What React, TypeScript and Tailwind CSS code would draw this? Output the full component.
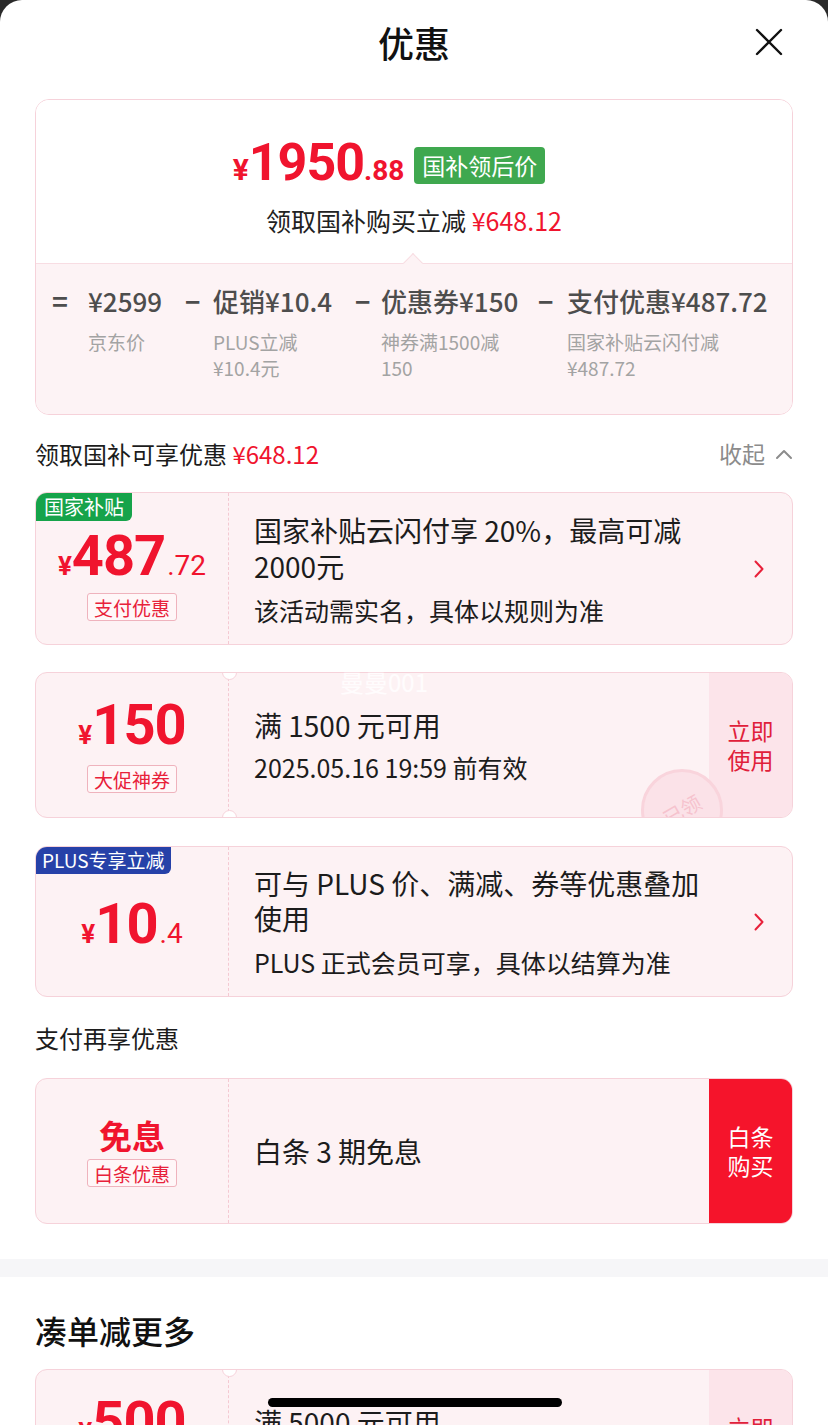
import React from 'react';

const cn = "font-['Noto_Sans_CJK_SC',sans-serif]";
const num = "font-['Roboto','Noto_Sans_CJK_SC',sans-serif]";

function ChevronRight() {
    return (
        <svg width="12" height="20" viewBox="0 0 12 20" fill="none">
            <path d="M2.5 2.5l7 7.5-7 7.5" stroke="#e8213a" strokeWidth="2" strokeLinecap="round" strokeLinejoin="round" />
        </svg>
    );
}

function Tag({ text }: { text: string }) {
    return (
        <span className="inline-flex h-[28px] items-center rounded-[3px] border border-[#efb3bd] bg-[#fff7f8] px-[6px] text-[19px] leading-none text-[#e8213a]">
            {text}
        </span>
    );
}

function Notches() {
    return (
        <>
            <div className="absolute left-[186px] top-[-8px] h-[15px] w-[15px] rounded-full border border-[#f6d2da] bg-white" />
            <div className="absolute bottom-[-8px] left-[186px] h-[15px] w-[15px] rounded-full border border-[#f6d2da] bg-white" />
        </>
    );
}

function Card({
    h,
    left,
    children,
    right,
    badge,
    notch,
    extra,
}: {
    h: string;
    left: React.ReactNode;
    children: React.ReactNode;
    right?: React.ReactNode;
    badge?: React.ReactNode;
    notch?: boolean;
    extra?: React.ReactNode;
}) {
    return (
        <div className={`relative flex ${h} overflow-hidden rounded-[12px] border border-[#f6d2da] bg-[#fdf2f4]`}>
            {badge}
            <div className="flex w-[193px] shrink-0 flex-col items-center justify-center border-r border-dashed border-[#f4c9d2]">
                {left}
            </div>
            <div className="flex min-w-0 flex-1 flex-col justify-center pl-[25px] text-[#1c1c1c]">{children}</div>
            {right}
            {notch && <Notches />}
            {extra}
        </div>
    );
}

function Price({ big, small }: { big: string; small?: string }) {
    return (
        <div className={`flex items-baseline text-[#f0142e] ${num}`}>
            <span className="text-[26px] font-bold">¥</span>
            <span className="text-[56px] font-bold leading-[56px] tracking-[-1px]">{big}</span>
            {small && <span className="ml-[2px] text-[28px]">{small}</span>}
        </div>
    );
}

export default function App() {
    return (
        <div className={`relative h-[1425px] w-[828px] overflow-hidden bg-[#2a2a2a] ${cn}`}>
            <div className="h-full w-full rounded-t-[22px] bg-white">
                {/* header */}
                <div className="relative flex h-[84px] items-center justify-center">
                    <h1 className="text-[36px] font-medium text-[#111]">优惠</h1>
                    <button className="absolute right-[44px] top-[27px]">
                        <svg width="30" height="30" viewBox="0 0 30 30">
                            <path d="M3 3l24 24M27 3L3 27" stroke="#111" strokeWidth="2.4" strokeLinecap="round" />
                        </svg>
                    </button>
                </div>

                <div className="px-[35px]">
                    {/* summary card */}
                    <div className="mt-[15px] overflow-hidden rounded-[14px] border border-[#f6d2da]">
                        <div className="flex h-[163px] flex-col items-center bg-white pt-[38px]">
                            <div className="mr-[50px] flex items-center">
                                <div className={`flex items-baseline text-[#f0142e] ${num}`}>
                                    <span className="text-[30px] font-bold">¥</span>
                                    <span className="text-[52px] font-bold leading-[50px] tracking-[-1px]">1950</span>
                                    <span className="text-[28px] font-bold">.88</span>
                                </div>
                                <span className="ml-[10px] rounded-[4px] bg-[#3fa84f] px-[8px] py-[3px] text-[23px] leading-[31px] text-white">
                                    国补领后价
                                </span>
                            </div>
                            <div className="mt-[10px] text-[25px] text-[#222]">
                                领取国补购买立减 <span className="text-[#f0142e]">¥648.12</span>
                            </div>
                        </div>
                        <div className="relative h-[151px] border-t border-[#f8dde3] bg-[#fdf3f5] pl-[16px] pt-[20px]">
                            <div className="absolute left-[370px] top-[-8px] h-[14px] w-[14px] rotate-45 border-l border-t border-[#f8dde3] bg-[#fdf3f5]" />
                            <div className="grid grid-cols-[36px_97px_28px_142px_26px_157px_29px_1fr] text-[#4d4d4d]">
                                <div className="text-[27px] font-bold leading-[34px]">=</div>
                                <div>
                                    <div className="text-[26px] font-medium leading-[34px]">¥2599</div>
                                    <div className="mt-[11px] text-[19px] leading-[26px] text-[#a3a3a3]">京东价</div>
                                </div>
                                <div className="text-[26px] font-bold leading-[34px]">−</div>
                                <div>
                                    <div className="text-[26px] font-medium leading-[34px]">促销¥10.4</div>
                                    <div className="mt-[11px] text-[19px] leading-[26px] text-[#a3a3a3]">
                                        PLUS立减
                                        <br />
                                        ¥10.4元
                                    </div>
                                </div>
                                <div className="text-[26px] font-bold leading-[34px]">−</div>
                                <div>
                                    <div className="text-[26px] font-medium leading-[34px]">优惠券¥150</div>
                                    <div className="mt-[11px] text-[19px] leading-[26px] text-[#a3a3a3]">
                                        神券满1500减
                                        <br />
                                        150
                                    </div>
                                </div>
                                <div className="text-[26px] font-bold leading-[34px]">−</div>
                                <div>
                                    <div className="whitespace-nowrap text-[26px] font-medium leading-[34px]">支付优惠¥487.72</div>
                                    <div className="mt-[11px] text-[19px] leading-[26px] text-[#a3a3a3]">
                                        国家补贴云闪付减
                                        <br />
                                        ¥487.72
                                    </div>
                                </div>
                            </div>
                        </div>
                    </div>

                    {/* section title */}
                    <div className="flex h-[77px] items-center justify-between">
                        <div className="text-[24px] text-[#1c1c1c]">
                            领取国补可享优惠 <span className="text-[#f0142e]">¥648.12</span>
                        </div>
                        <div className="flex items-center gap-[10px] text-[23px] text-[#8c8c8c]">
                            收起
                            <svg width="18" height="12" viewBox="0 0 18 12" fill="none">
                                <path d="M2 10l7-7 7 7" stroke="#8c8c8c" strokeWidth="2" strokeLinecap="round" strokeLinejoin="round" />
                            </svg>
                        </div>
                    </div>

                    {/* 国家补贴 */}
                    <Card
                        h="h-[153px]"
                        badge={
                            <div className="absolute left-0 top-0 flex h-[28px] items-center rounded-br-[6px] bg-[#16a34a] px-[8px] text-[20px] text-white">
                                国家补贴
                            </div>
                        }
                        left={
                            <div className="mt-[12px] flex flex-col items-center">
                                <Price big="487" small=".72" />
                                <div className="mt-[6px]">
                                    <Tag text="支付优惠" />
                                </div>
                            </div>
                        }
                        right={
                            <div className="flex w-[66px] items-center justify-center">
                                <ChevronRight />
                            </div>
                        }
                    >
                        <div className="text-[28px] leading-[36px]">
                            国家补贴云闪付享 20%，最高可减
                            <br />
                            2000元
                        </div>
                        <div className="mt-[10px] text-[25px] leading-[32px]">该活动需实名，具体以规则为准</div>
                    </Card>

                    {/* 神券 */}
                    <div className="mt-[27px]">
                        <Card
                            h="h-[146px]"
                            notch
                            left={
                                <div className="flex flex-col items-center">
                                    <Price big="150" />
                                    <div className="mt-[10px]">
                                        <Tag text="大促神券" />
                                    </div>
                                </div>
                            }
                            right={
                                <div className="flex w-[83px] items-center justify-center bg-[#fce4ea] text-center text-[23px] leading-[29px] text-[#e0203a]">
                                    立即
                                    <br />
                                    使用
                                </div>
                            }
                            extra={
                                <div className="absolute left-[605px] top-[96px] flex h-[82px] w-[82px] items-center justify-center rounded-full border-[3px] border-[#f9d4dc] bg-[#fbe2e8]">
                                    <span className="-rotate-[30deg] text-[20px] text-[#f6c3ce]">已领</span>
                                </div>
                            }
                        >
                            <div className="text-[28px] leading-[36px]">满 1500 元可用</div>
                            <div className="mt-[8px] text-[25px] leading-[32px]">2025.05.16 19:59 前有效</div>
                        </Card>
                    </div>

                    {/* PLUS */}
                    <div className="mt-[28px]">
                        <Card
                            h="h-[151px]"
                            badge={
                                <div className="absolute left-0 top-0 flex h-[27px] items-center rounded-br-[6px] bg-[#2641a8] px-[6px] text-[19px] text-white">
                                    PLUS专享立减
                                </div>
                            }
                            left={
                                <div className="mt-[8px]">
                                    <Price big="10" small=".4" />
                                </div>
                            }
                            right={
                                <div className="flex w-[66px] items-center justify-center">
                                    <ChevronRight />
                                </div>
                            }
                        >
                            <div className="text-[28px] leading-[35px]">
                                可与 PLUS 价、满减、券等优惠叠加
                                <br />
                                使用
                            </div>
                            <div className="mt-[10px] text-[25px] leading-[32px]">PLUS 正式会员可享，具体以结算为准</div>
                        </Card>
                    </div>

                    <div className="flex h-[81px] items-center text-[24px] text-[#1c1c1c]">支付再享优惠</div>

                    {/* 白条 */}
                    <Card
                        h="h-[146px]"
                        left={
                            <div className="flex flex-col items-center">
                                <div className="text-[33px] font-bold leading-[40px] text-[#f0142e]">免息</div>
                                <div className="mt-[4px]">
                                    <Tag text="白条优惠" />
                                </div>
                            </div>
                        }
                        right={
                            <div className="flex w-[83px] items-center justify-center bg-[#f5142b] text-center text-[23px] leading-[29px] text-white">
                                白条
                                <br />
                                购买
                            </div>
                        }
                    >
                        <div className="text-[28px] leading-[36px]">白条 3 期免息</div>
                    </Card>
                </div>

                <div className="mt-[35px] h-[18px] bg-[#f6f6f8]" />

                <div className="px-[35px]">
                    <div className="flex h-[92px] items-center pt-[14px] text-[32px] font-medium text-[#111]">凑单减更多</div>
                    <Card
                        h="h-[146px]"
                        notch
                        left={
                            <div className="flex flex-col items-center">
                                <Price big="500" />
                                <div className="mt-[10px]">
                                    <Tag text="大促神券" />
                                </div>
                            </div>
                        }
                        right={
                            <div className="flex w-[83px] items-center justify-center bg-[#fce4ea] text-center text-[23px] leading-[29px] text-[#e0203a]">
                                立即
                                <br />
                                使用
                            </div>
                        }
                    >
                        <div className="text-[28px] leading-[36px]">满 5000 元可用</div>
                        <div className="mt-[8px] text-[25px] leading-[32px]">2025.05.16 19:59 前有效</div>
                    </Card>
                </div>
            </div>

            {/* watermark */}
            <div className="absolute left-[340px] top-[664px] text-[24px] text-white/80">曼曼001</div>

            {/* home indicator */}
            <div className="absolute bottom-[18px] left-[268px] h-[9px] w-[294px] rounded-full bg-black" />
        </div>
    );
}
